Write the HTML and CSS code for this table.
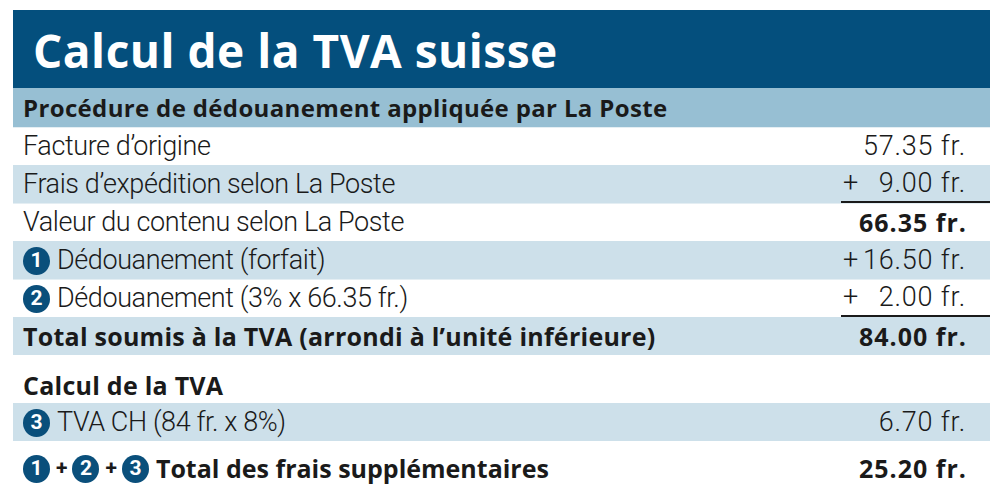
FILE: index.html
```html
<!DOCTYPE html>
<html lang="fr">
<head>
<meta charset="utf-8">
<title>Calcul de la TVA suisse</title>
<link rel="stylesheet" href="styles.css">
</head>
<body>
<div class="card">
  <h1 class="title">Calcul de la TVA suisse</h1>
  <div class="row sub"><span class="label">Procédure de dédouanement appliquée par La Poste</span></div>
  <div class="row"><span class="label">Facture d’origine</span><span class="amt"><span class="plus"></span><span class="num">57.35 fr.</span></span></div>
  <div class="row alt"><span class="label">Frais d’expédition selon La Poste</span><span class="amt rule"><span class="plus">+</span><span class="num">9.00 fr.</span></span></div>
  <div class="row"><span class="label">Valeur du contenu selon La Poste</span><span class="amt strong"><span class="plus"></span><span class="num">66.35 fr.</span></span></div>
  <div class="row alt"><span class="label"><span class="badge">1</span>Dédouanement (forfait)</span><span class="amt"><span class="plus">+</span><span class="num">16.50 fr.</span></span></div>
  <div class="row"><span class="label"><span class="badge">2</span>Dédouanement (3% x 66.35 fr.)</span><span class="amt rule"><span class="plus">+</span><span class="num">2.00 fr.</span></span></div>
  <div class="row alt strong"><span class="label">Total soumis à la TVA (arrondi à l’unité inférieure)</span><span class="amt"><span class="plus"></span><span class="num">84.00 fr.</span></span></div>
  <div class="row section strong"><span class="label">Calcul de la TVA</span></div>
  <div class="row alt"><span class="label"><span class="badge">3</span>TVA CH (84 fr. x 8%)</span><span class="amt"><span class="plus"></span><span class="num">6.70 fr.</span></span></div>
  <div class="row final strong"><span class="label"><span class="badge">1</span><span class="op">+</span><span class="badge">2</span><span class="op">+</span><span class="badge">3</span>Total des frais supplémentaires</span><span class="amt"><span class="plus"></span><span class="num">25.20 fr.</span></span></div>
</div>
</body>
</html>
```

FILE: styles.css
```css
html, body {
  margin: 0;
  padding: 0;
  background: #ffffff;
}
body {
  font-family: Roboto, "Noto Sans", "DejaVu Sans", sans-serif;
  color: #1a1a1a;
}
.card {
  width: 977px;
  margin: 10px 0 0 13px;
  display: flex;
  flex-direction: column;
}
.title {
  margin: 0;
  height: 78px;
  background: #044f7d;
  color: #ffffff;
  font-family: "Open Sans", "Noto Sans", sans-serif;
  font-weight: 700;
  font-size: 46px;
  letter-spacing: 0.5px;
  line-height: 80px;
  padding-left: 20px;
}
.row {
  height: 38px;
  display: flex;
  align-items: center;
  justify-content: space-between;
  font-size: 27px;
  font-weight: 300;
  letter-spacing: -0.4px;
  padding-left: 10px;
  box-sizing: border-box;
  border-top: 1px solid #e4eef3;
  line-height: 1;
}
.row.alt {
  background: #cde0ea;
  border-top-color: #cde0ea;
}
.row.sub {
  height: 39px;
  background: #97bfd3;
  font-family: "Open Sans", "Noto Sans", sans-serif;
  font-weight: 700;
  font-size: 24px;
  letter-spacing: 0.35px;
  border-top: 0;
}
.row.strong {
  font-family: "Open Sans", "Noto Sans", sans-serif;
  font-weight: 700;
  font-size: 25px;
  letter-spacing: 0.25px;
}
.row.section {
  height: 48px;
  align-items: flex-end;
  padding-bottom: 5px;
  border-top: 0;
}
.row.final {
  height: 55px;
  border-top: 0;
}
.row.final .label {
  letter-spacing: 0;
}
.label {
  display: flex;
  align-items: center;
}
.amt {
  width: 149px;
  flex-shrink: 0;
  align-self: stretch;
  display: flex;
  align-items: center;
  justify-content: space-between;
  gap: 3px;
  padding-right: 25px;
  box-sizing: border-box;
}
.amt.rule {
  border-bottom: 2px solid #1a1a1a;
}
.amt.strong {
  font-family: "Open Sans", "Noto Sans", sans-serif;
  font-weight: 700;
  font-size: 25px;
  letter-spacing: 0;
}
.plus {
  width: 13px;
  flex-shrink: 0;
  text-align: left;
  letter-spacing: 0;
  margin-left: 2px;
}
.num {
  text-align: right;
  letter-spacing: 0.8px;
  margin-right: -1px;
  white-space: nowrap;
}
.amt.strong .num,
.row.strong .num {
  letter-spacing: 1px;
}
.badge {
  flex-shrink: 0;
  display: inline-flex;
  align-items: center;
  justify-content: center;
  width: 27px;
  height: 28px;
  border-radius: 50%;
  background: #0a4f7b;
  color: #ffffff;
  font-family: Roboto, sans-serif;
  font-weight: 700;
  font-size: 21px;
  letter-spacing: 0;
  margin-right: 7px;
}
.op {
  font-family: Roboto, sans-serif;
  font-weight: 700;
  font-size: 21px;
  margin: 0 5px 0 -1px;
}
```
